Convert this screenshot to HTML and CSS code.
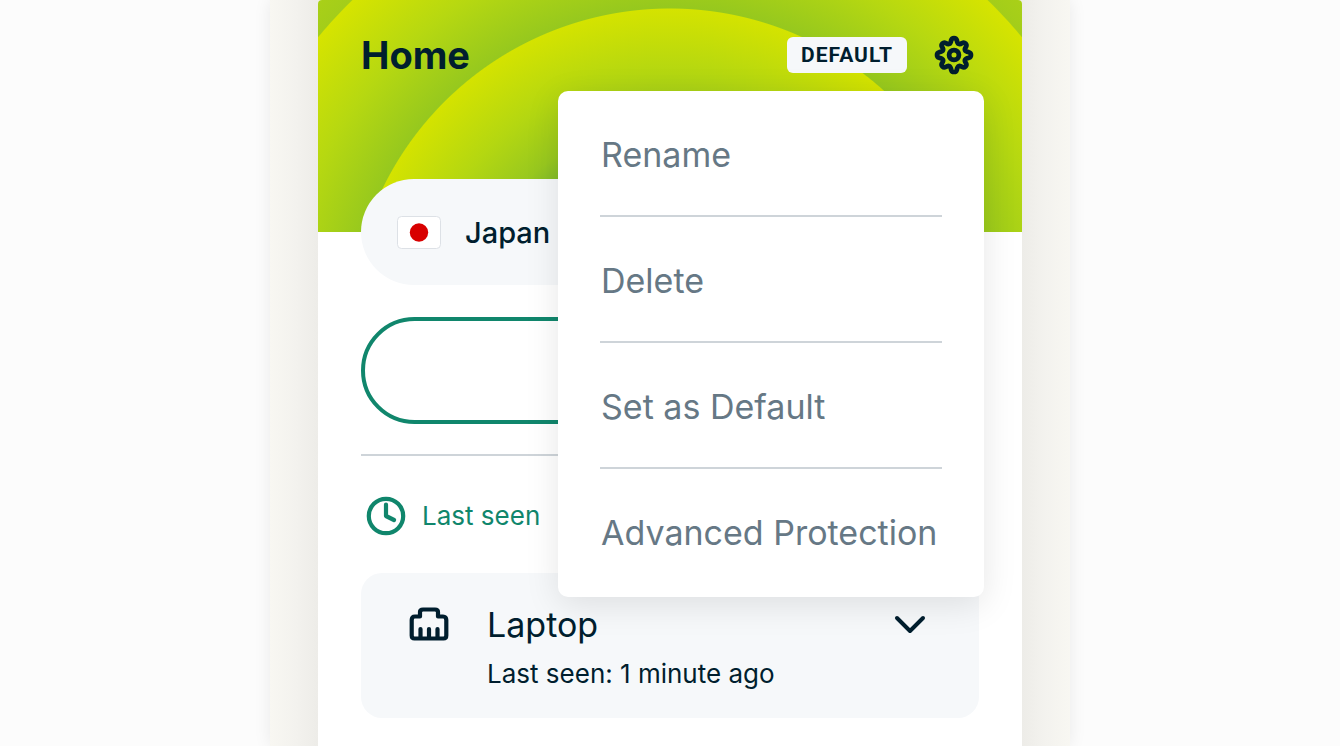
FILE: index.html
```html
<!DOCTYPE html>
<html lang="en">
<head>
<meta charset="utf-8">
<title>Home</title>
<meta name="viewport" content="width=device-width, initial-scale=1">
<link rel="stylesheet" href="styles.css">
</head>
<body>
<div class="frame">
  <main class="screen">
    <header class="hero">
      <h1 class="title">Home</h1>
      <span class="badge">DEFAULT</span>
      <div class="settings">
        <button class="icon-button" type="button" aria-label="Settings" aria-expanded="true">
          <svg class="gear" viewBox="0 0 40 40" fill="none" stroke="currentColor" stroke-width="4.8" stroke-linejoin="round" aria-hidden="true">
            <path d="M17.200 5.200 A2.900 2.900 0 0 1 22.800 5.200 C23.600 9.400 25.400 10 28.200 8 A2.800 2.800 0 0 1 32 11.800 C30 14.600 30.600 16.400 34.800 17.200 A2.900 2.900 0 0 1 34.800 22.800 C30.600 23.600 30 25.400 32 28.200 A2.800 2.800 0 0 1 28.200 32 C25.400 30 23.600 30.600 22.800 34.800 A2.900 2.900 0 0 1 17.200 34.800 C16.400 30.600 14.600 30 11.800 32 A2.800 2.800 0 0 1 8 28.200 C10 25.400 9.400 23.600 5.200 22.800 A2.900 2.900 0 0 1 5.200 17.200 C9.400 16.400 10 14.600 8 11.800 A2.800 2.800 0 0 1 11.800 8 C14.600 10 16.400 9.400 17.200 5.200Z"/>
            <circle cx="20" cy="20" r="4.900"/>
          </svg>
        </button>
        <ul class="menu">
          <li class="menu-row"><button class="menu-item" type="button">Rename</button></li>
          <li class="menu-row"><button class="menu-item" type="button">Delete</button></li>
          <li class="menu-row"><button class="menu-item" type="button">Set as Default</button></li>
          <li class="menu-row"><button class="menu-item" type="button">Advanced Protection</button></li>
        </ul>
      </div>
    </header>
    <div class="content">
      <button class="location" type="button">
        <svg class="flag" viewBox="0 0 44 33" aria-hidden="true">
          <rect x="0.5" y="0.5" width="43" height="32" rx="4" fill="#fff" stroke="#dde1e6"/>
          <circle cx="22" cy="16.5" r="9.2" fill="#d80000"/>
        </svg>
        <span>Japan</span>
      </button>
      <button class="action" type="button" aria-label="Connect"></button>
      <hr class="divider">
      <p class="sort">
        <svg class="clock" viewBox="0 0 40 40" fill="none" stroke="currentColor" stroke-width="4.2" stroke-linecap="round" stroke-linejoin="round" aria-hidden="true">
          <circle cx="20" cy="20" r="17.2"/>
          <path d="M20 8.500V20L28 24"/>
        </svg>
        <span>Last seen</span>
      </p>
      <section class="device">
        <svg class="ethernet" viewBox="0 0 40 34" fill="none" stroke="currentColor" stroke-width="4.2" stroke-linecap="round" stroke-linejoin="round" aria-hidden="true">
          <path d="M5.500 31.500H34.500Q37.300 31.500 37.300 28.500V13Q37.300 9.500 34 9.500H29V5Q29 2.500 26 2.500H14Q11 2.500 11 5V9.500H6Q2.700 9.500 2.700 13V28.500Q2.700 31.500 5.500 31.500Z"/>
          <path d="M11.500 22V31M20 22V31M28.500 22V31"/>
        </svg>
        <div class="device-text">
          <h2 class="device-name">Laptop</h2>
          <p class="device-seen">Last seen: 1 minute ago</p>
        </div>
        <button class="icon-button" type="button" aria-label="Show details">
          <svg class="chevron" viewBox="0 0 32 20" fill="none" stroke="currentColor" stroke-width="4" stroke-linecap="round" stroke-linejoin="round" aria-hidden="true">
            <path d="M3 3L16 16L29 3"/>
          </svg>
        </button>
      </section>
    </div>
  </main>
</div>
</body>
</html>
```
FILE: styles.css
```css
* {
  box-sizing: border-box;
}

body {
  margin: 0;
  background: #fcfcfc;
  color: #001e2e;
  font-family: Inter, "Liberation Sans", sans-serif;
}

h1, h2, p, ul {
  margin: 0;
  padding: 0;
}

button {
  margin: 0;
  padding: 0;
  border: 0;
  background: none;
  color: inherit;
  font: inherit;
}

svg {
  display: block;
  flex: none;
}

.frame {
  display: flex;
  max-width: 800px;
  min-height: 100vh;
  margin: 0 auto;
  padding: 0 48px;
  background: linear-gradient(90deg, #f8f7f2, #f3f2ee 26px, #edece8 48px, #edece8 calc(100% - 48px), #f3f2ee calc(100% - 26px), #f8f7f2);
  box-shadow: 0 0 16px rgba(0, 0, 0, 0.08);
}

.screen {
  flex: 1;
  background: #fff;
  border-radius: 4px 4px 0 0;
}

.hero {
  display: flex;
  align-items: flex-start;
  height: 232px;
  padding: 35px 48px 0 43px;
  border-radius: 4px 4px 0 0;
  background: radial-gradient(circle at 50% 328px,
    #82bb2a 186px, #98c81f 206px, #b4d711 255px, #d4e300 319px,
    #96c81e 320px, #b6d811 385px, #d6e400 456px,
    #a3cd1a 457px, #b4d514 520px);
}

.title {
  flex: 1;
  font-size: 38px;
  line-height: 40px;
  font-weight: 700;
}

.badge {
  margin: 2px 27px 0 0;
  padding: 1px 14px 0;
  border-radius: 6px;
  background: #f6f8fa;
  font: 700 21px/35px Roboto, sans-serif;
  letter-spacing: 1px;
}

.settings {
  position: relative;
}

.gear {
  width: 40px;
  height: 40px;
}

.menu {
  position: absolute;
  top: 56px;
  right: -10px;
  z-index: 1;
  width: 426px;
  padding: 42px;
  border-radius: 10px;
  background: #fff;
  box-shadow: 0 8px 34px rgba(0, 0, 0, 0.1);
  list-style: none;
}

.menu-row + .menu-row {
  margin-top: 38px;
  padding-top: 42px;
  border-top: 2px solid #ced4d9;
}

.menu-item {
  display: block;
  width: 100%;
  padding-left: 1px;
  color: #667885;
  font-size: 34px;
  line-height: 44px;
  text-align: left;
  white-space: nowrap;
}

.content {
  display: flex;
  flex-direction: column;
  margin-top: -53px;
  padding: 0 43px 28px;
}

.location {
  display: flex;
  align-items: center;
  gap: 24px;
  height: 106px;
  padding: 0 36px;
  border-radius: 53px;
  background: #f6f8fa;
  font-size: 29px;
  font-weight: 500;
}

.flag {
  width: 44px;
  height: 33px;
}

.action {
  height: 107px;
  margin-top: 32px;
  border: 4px solid #10866c;
  border-radius: 54px;
}

.divider {
  width: 100%;
  margin: 30px 0 40px;
  border: 0;
  border-top: 2px solid #ced4d9;
}

.sort {
  display: flex;
  align-items: center;
  gap: 16px;
  padding-left: 5px;
  color: #10866c;
  font-size: 26px;
  line-height: 34px;
}

.clock {
  width: 40px;
  height: 40px;
}

.device {
  display: flex;
  align-items: flex-start;
  margin-top: 37px;
  padding: 30px 53px 26px 48px;
  border-radius: 21px;
  background: #f6f8fa;
}

.ethernet {
  width: 40px;
  height: 34px;
  margin-top: 4px;
}

.device-text {
  flex: 1;
  margin-left: 38px;
}

.device-name {
  font-size: 34px;
  line-height: 44px;
  font-weight: 400;
}

.device-seen {
  margin-top: 9px;
  font-size: 26px;
  line-height: 36px;
}

.chevron {
  width: 32px;
  height: 20px;
  margin-top: 12px;
}
```
